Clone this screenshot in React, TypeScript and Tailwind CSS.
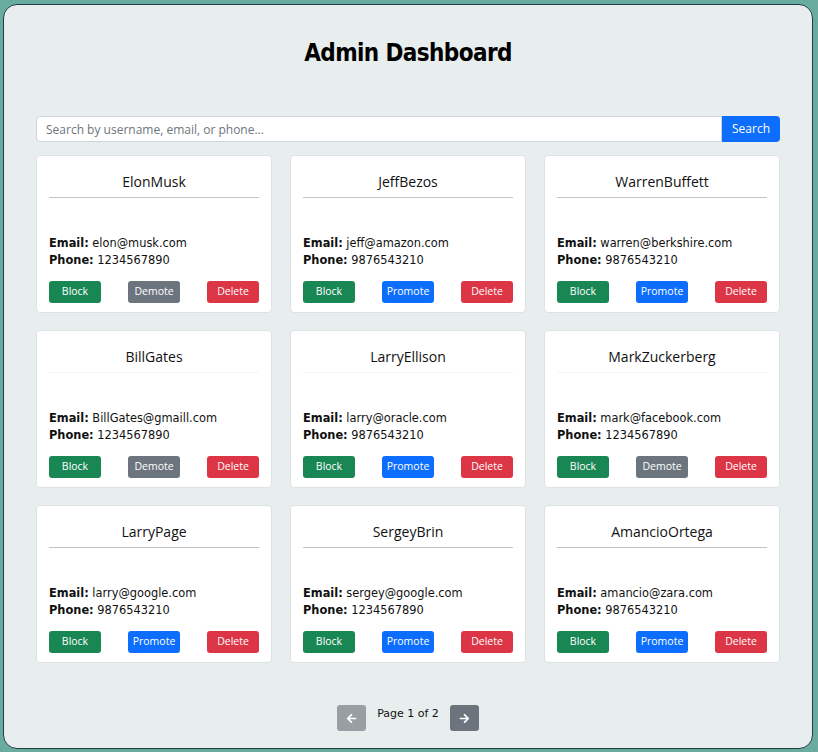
import React from 'react';
import { FaArrowLeft, FaArrowRight } from 'react-icons/fa';

type User = { name: string; email: string; phone: string; admin: boolean };

const users: User[] = [
  { name: 'ElonMusk', email: 'elon@musk.com', phone: '1234567890', admin: true },
  { name: 'JeffBezos', email: 'jeff@amazon.com', phone: '9876543210', admin: false },
  { name: 'WarrenBuffett', email: 'warren@berkshire.com', phone: '9876543210', admin: false },
  { name: 'BillGates', email: 'BillGates@gmaill.com', phone: '1234567890', admin: true },
  { name: 'LarryEllison', email: 'larry@oracle.com', phone: '9876543210', admin: false },
  { name: 'MarkZuckerberg', email: 'mark@facebook.com', phone: '1234567890', admin: true },
  { name: 'LarryPage', email: 'larry@google.com', phone: '9876543210', admin: false },
  { name: 'SergeyBrin', email: 'sergey@google.com', phone: '1234567890', admin: false },
  { name: 'AmancioOrtega', email: 'amancio@zara.com', phone: '9876543210', admin: false },
];

function UserCard({ user, faint }: { user: User; faint: boolean }) {
  return (
    <div className="bg-white border border-[#dee2e6] rounded-[4px] px-[12px] pt-[16px] pb-[9px]">
      <h5 className="text-center text-[14px] leading-[20px] text-[#111] font-['Open_Sans',sans-serif]">
        {user.name}
      </h5>
      <div className={faint ? 'mt-[5px] h-px bg-[#f5f5f5]' : 'mt-[5px] h-px bg-[#c4c4c4]'} />
      <div className="mt-[37px] text-[11.4px] leading-[17px] text-[#111] font-['DejaVu_Sans',sans-serif]">
        <p><span className="font-bold">Email:</span> {user.email}</p>
        <p><span className="font-bold">Phone:</span> {user.phone}</p>
      </div>
      <div className="mt-[12px] flex justify-between font-['Open_Sans',sans-serif] text-[10.5px] text-white">
        <button className="w-[52px] h-[22px] rounded-[3px] bg-[#198754]">Block</button>
        {user.admin ? (
          <button className="w-[52px] h-[22px] rounded-[3px] bg-[#6c757d]">Demote</button>
        ) : (
          <button className="w-[52px] h-[22px] rounded-[3px] bg-[#0d6efd]">Promote</button>
        )}
        <button className="w-[52px] h-[22px] rounded-[3px] bg-[#dc3545]">Delete</button>
      </div>
    </div>
  );
}

export default function App() {
  return (
    <div className="min-h-screen bg-[#6aaba0] pt-[4px] pl-[3px] pr-[5px] pb-[3px]">
      <div className="h-[745px] rounded-[14px] border border-[#1d3f45] bg-[#e8eded] px-[32px]">
        <h1 className="pt-[32px] text-center text-[24px] leading-[32px] font-extrabold text-black font-['DejaVu_Sans',sans-serif] [font-stretch:condensed] tracking-[-0.6px]">
          Admin Dashboard
        </h1>
        <div className="mt-[47px] flex">
          <input
            className="flex-1 h-[26px] bg-white border border-[#ced4da] rounded-l-[4px] px-[9px] text-[12px] font-['Open_Sans',sans-serif] placeholder:text-[#6c757d] outline-none"
            placeholder="Search by username, email, or phone..."
          />
          <button className="w-[58px] h-[26px] bg-[#0d6efd] text-white rounded-r-[4px] text-[12px] font-['Open_Sans',sans-serif]">
            Search
          </button>
        </div>
        <div className="mt-[13px] grid grid-cols-3 gap-x-[18px] gap-y-[17px]">
          {users.map((u, i) => (
            <UserCard key={u.name} user={u} faint={i >= 3 && i < 6} />
          ))}
        </div>
        <div className="mt-[42px] flex justify-center items-start gap-[11px]">
          <button className="w-[29px] h-[26px] rounded-[3px] bg-[#999ea4] text-white flex items-center justify-center">
            <FaArrowLeft size={11} />
          </button>
          <span className="pt-[1px] text-[11px] leading-[16px] text-[#111] font-['DejaVu_Sans',sans-serif]">Page 1 of 2</span>
          <button className="w-[29px] h-[26px] rounded-[3px] bg-[#6c757d] text-white flex items-center justify-center">
            <FaArrowRight size={11} />
          </button>
        </div>
      </div>
    </div>
  );
}
